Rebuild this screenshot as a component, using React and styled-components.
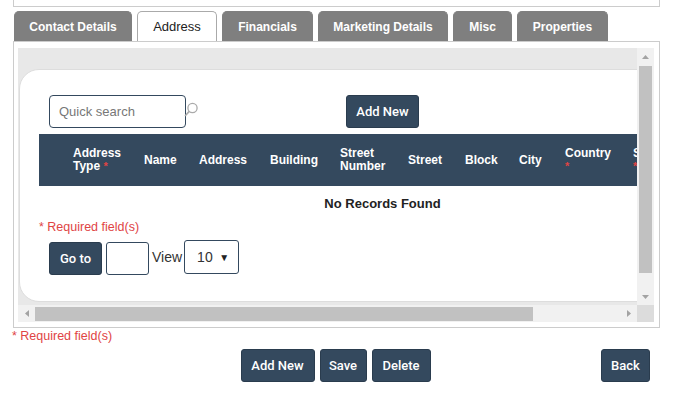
import React from 'react';
import styled, { createGlobalStyle } from 'styled-components';

const GlobalStyle = createGlobalStyle`
  body {
    margin: 0;
    background: #fff;
    font-family: "Liberation Sans", Arial, sans-serif;
    color: #222;
  }
`;

const DARK = '#34495e';
const RED = '#e04444';

/* Page frame
   ========================================================================== */
const Page = styled.div`
  width: 673px;
  height: 396px;
  overflow: hidden;
`;

// Bottom edge of the panel above (cut off by the top of the window)
const TopBox = styled.div`
  margin-left: 13px;
  width: 647px;
  height: 7px;
  box-sizing: border-box;
  border: 1px solid #ccc;
  border-top: none;
`;

/* Tabs
   ========================================================================== */
const TabBar = styled.div`
  display: flex;
  gap: 5px;
  margin: 4px 0 0 14px;
`;

const Tab = styled.div`
  height: 30px;
  box-sizing: border-box;
  display: flex;
  align-items: center;
  justify-content: center;
  width: ${(p) => p.$w}px;
  border-radius: 5px 5px 0 0;
  border: 1px solid ${(p) => (p.$active ? '#aaa' : '#7f7f7f')};
  border-bottom: none;
  background: ${(p) => (p.$active ? '#fff' : '#7f7f7f')};
  color: ${(p) => (p.$active ? '#222' : '#fff')};
  font-size: ${(p) => (p.$active ? '13px' : '12px')};
  font-weight: ${(p) => (p.$active ? 'normal' : 'bold')};
  white-space: nowrap;
`;

const Panel = styled.div`
  margin-left: 13px;
  width: 647px;
  height: 287px;
  box-sizing: border-box;
  border: 1px solid #ccc;
  padding: 6px 5px 5px 4px;
`;

/* Scroll area with drawn scrollbars
   ========================================================================== */
const Scroller = styled.div`
  display: grid;
  grid-template-columns: 1fr 17px;
  grid-template-rows: 1fr 17px;
  height: 100%;
`;

const Viewport = styled.div`
  background: #e8e8e8;
  overflow: hidden;
  padding: 21px 0 0 1px;
`;

const VBar = styled.div`
  background: #f1f1f1;
  display: flex;
  flex-direction: column;
  align-items: center;
`;

const HBar = styled.div`
  background: #f1f1f1;
  display: flex;
  align-items: center;
`;

const Corner = styled.div`
  background: #dcdcdc;
`;

const ArrowBox = styled.div`
  width: 17px;
  height: 17px;
  flex: none;
  display: flex;
  align-items: center;
  justify-content: center;
`;

const VThumb = styled.div`
  width: 13px;
  height: 207px;
  margin-top: 1px;
  background: #c1c1c1;
`;

const HThumb = styled.div`
  width: 498px;
  height: 14px;
  background: #c1c1c1;
`;

const Spacer = styled.div`
  flex: 1;
`;

const Arrow = ({ dir }) => {
  const pts = {
    up: '0,4 7,4 3.5,0',
    down: '0,0 7,0 3.5,4',
    left: '4,0 4,7 0,3.5',
    right: '0,0 0,7 4,3.5',
  }[dir];
  const vertical = dir === 'up' || dir === 'down';
  return (
    <ArrowBox>
      <svg width={vertical ? 7 : 4} height={vertical ? 4 : 7}>
        <polygon points={pts} fill="#a3a3a3" />
      </svg>
    </ArrowBox>
  );
};

/* Card with the grid
   ========================================================================== */
const Card = styled.div`
  width: 728px;
  height: 233px;
  box-sizing: border-box;
  background: #fff;
  border: 1px solid #ddd;
  border-radius: 20px;
  padding: 25px 20px 0 19px;
`;

const Toolbar = styled.div`
  display: grid;
  grid-template-columns: 1fr auto 1fr;
  align-items: center;
  height: 33px;
`;

const SearchWrap = styled.div`
  display: flex;
  align-items: center;
  margin-left: 10px;
`;

const SearchInput = styled.div`
  width: 137px;
  height: 33px;
  box-sizing: border-box;
  border: 1px solid ${DARK};
  border-radius: 4px;
  display: flex;
  align-items: center;
  padding-left: 9px;
  font-size: 13px;
  color: #777;
`;

const SearchIcon = styled.svg`
  margin-left: -3px;
  margin-top: -2px;
`;

// Dark action button; width is fixed per use
const Button = styled.div`
  width: ${(p) => p.$w}px;
  height: 33px;
  box-sizing: border-box;
  display: inline-flex;
  align-items: center;
  justify-content: center;
  background: ${DARK};
  color: #fff;
  border: 1px solid #2a3c4e;
  border-radius: 3px;
  font-family: Roboto, "Liberation Sans", sans-serif;
  font-weight: 500;
  font-size: 13px;
  white-space: nowrap;
`;

const HeaderRow = styled.div`
  margin-top: 6px;
  height: 52px;
  background: ${DARK};
  display: grid;
  grid-template-columns: 34px 71px 55px 71px 70px 68px 57px 54px 46px 68px 1fr;
  align-items: center;
`;

const HeadCell = styled.div`
  color: #fff;
  font-weight: bold;
  font-size: 12px;
  line-height: 13px;
  white-space: nowrap;
`;

const Star = styled.span`
  color: ${RED};
  font-size: 11px;
`;

const EmptyRow = styled.div`
  height: 34px;
  display: flex;
  align-items: center;
  justify-content: center;
  font-weight: bold;
  font-size: 13px;
  color: #222;
`;

const Required = styled.div`
  color: ${RED};
  font-size: 12.5px;
  line-height: 14px;
  margin-left: ${(p) => p.$indent || 0}px;
  margin-top: ${(p) => p.$top || 0}px;
`;

const Pager = styled.div`
  display: flex;
  align-items: flex-start;
  margin: 8px 0 0 10px;
`;

const Box = styled.div`
  width: ${(p) => p.$w}px;
  height: ${(p) => p.$h || 33}px;
  box-sizing: border-box;
  border: 1px solid ${DARK};
  border-radius: 3px;
  margin-left: ${(p) => p.$ml || 0}px;
  display: flex;
  align-items: center;
  font-size: 14px;
  color: #333;
`;

const SelectBox = styled(Box)`
  justify-content: space-between;
  padding: 0 9px 0 12px;
  margin-top: -2px;
`;

const Caret = styled.span`
  font-size: 10px;
  color: #222;
`;

const ViewLabel = styled.span`
  align-self: center;
  font-size: 14px;
  color: #333;
  margin: -3px 2px 0 3px;
`;

/* Bottom action bar
   ========================================================================== */
const Actions = styled.div`
  margin: 6px 0 0 13px;
  width: 645px;
  display: grid;
  grid-template-columns: 1fr auto 1fr;
`;

const Group = styled.div`
  grid-column: 2;
  display: flex;
  gap: 5px;
`;

const BackWrap = styled.div`
  justify-self: end;
  margin-right: 8px;
`;

const tabs = [
  { label: 'Contact Details', w: 118 },
  { label: 'Address', w: 80 },
  { label: 'Financials', w: 91 },
  { label: 'Marketing Details', w: 130 },
  { label: 'Misc', w: 59 },
  { label: 'Properties', w: 91 },
];

export default function App() {
  return (
    <Page>
      <GlobalStyle />
      <TopBox />
      <TabBar>
        {tabs.map((t) => (
          <Tab key={t.label} $w={t.w} $active={t.label === 'Address'}>{t.label}</Tab>
        ))}
      </TabBar>
      <Panel>
        <Scroller>
          <Viewport>
            <Card>
              <Toolbar>
                <SearchWrap>
                  <SearchInput>Quick search</SearchInput>
                  <SearchIcon width="15" height="17" viewBox="0 0 15 17">
                    <circle cx="9.5" cy="6" r="4.6" fill="none" stroke="#aaa" strokeWidth="1.3" />
                    <line x1="6.2" y1="9.4" x2="2" y2="14" stroke="#aaa" strokeWidth="1.6" />
                  </SearchIcon>
                </SearchWrap>
                <Button $w={73}>Add New</Button>
                <div />
              </Toolbar>
              <HeaderRow>
                <div />
                <HeadCell>Address<br />Type <Star>*</Star></HeadCell>
                <HeadCell>Name</HeadCell>
                <HeadCell>Address</HeadCell>
                <HeadCell>Building</HeadCell>
                <HeadCell>Street<br />Number</HeadCell>
                <HeadCell>Street</HeadCell>
                <HeadCell>Block</HeadCell>
                <HeadCell>City</HeadCell>
                <HeadCell>Country<br /><Star>*</Star></HeadCell>
                <HeadCell>State<br /><Star>*</Star></HeadCell>
              </HeaderRow>
              <EmptyRow>No Records Found</EmptyRow>
              <Required>* Required field(s)</Required>
              <Pager>
                <Button $w={53}>Go to</Button>
                <Box $w={43} $ml={4} />
                <ViewLabel>View</ViewLabel>
                <SelectBox $w={55} $h={34}>
                  <span>10</span>
                  <Caret>▼</Caret>
                </SelectBox>
              </Pager>
            </Card>
          </Viewport>
          <VBar>
            <Arrow dir="up" />
            <VThumb />
            <Spacer />
            <Arrow dir="down" />
          </VBar>
          <HBar>
            <Arrow dir="left" />
            <HThumb />
            <Spacer />
            <Arrow dir="right" />
          </HBar>
          <Corner />
        </Scroller>
      </Panel>
      <Required $indent={12} $top={1}>* Required field(s)</Required>
      <Actions>
        <Group>
          <Button $w={74}>Add New</Button>
          <Button $w={47}>Save</Button>
          <Button $w={59}>Delete</Button>
        </Group>
        <BackWrap>
          <Button $w={49}>Back</Button>
        </BackWrap>
      </Actions>
    </Page>
  );
}
